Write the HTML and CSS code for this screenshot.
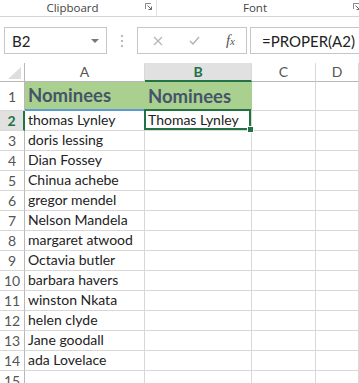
FILE: index.html
```html
<!DOCTYPE html>
<html lang="en">
<head>
    <meta charset="UTF-8">
    <meta name="viewport" content="width=device-width, initial-scale=1.0">
    <title>Nominees - Excel</title>
    <link rel="stylesheet" href="styles.css">
</head>
<body>

<!-- Ribbon group labels -->
<div class="ribbon">
  <div class="group group-clipboard">
    <span class="group-label">Clipboard</span>
    <svg class="launcher" width="7" height="7" viewBox="0 0 7 7"><path d="M0.5 6V0.5H6" fill="none" stroke="#8a8a8a"/><path d="M2.5 2.5L6.5 6.5M3.5 6.5H6.5V3.5" fill="none" stroke="#6a6a6a"/></svg>
  </div>
  <div class="group group-font">
    <span class="group-label">Font</span>
    <svg class="launcher" width="7" height="7" viewBox="0 0 7 7"><path d="M0.5 6V0.5H6" fill="none" stroke="#8a8a8a"/><path d="M2.5 2.5L6.5 6.5M3.5 6.5H6.5V3.5" fill="none" stroke="#6a6a6a"/></svg>
  </div>
</div>

<!-- Formula bar -->
<div class="formula-bar">
  <div class="name-box">
    <span>B2</span>
    <span class="caret"></span>
  </div>
  <div class="grip"><i></i><i></i><i></i></div>
  <div class="fx-buttons">
    <svg width="10" height="10" viewBox="0 0 10 10"><path d="M1 1L9 9M9 1L1 9" stroke="#b5b5b5" stroke-width="1.3"/></svg>
    <svg width="11" height="9" viewBox="0 0 11 9"><path d="M1 5L4 8L10 1" fill="none" stroke="#b5b5b5" stroke-width="1.5"/></svg>
    <span class="fx">f<small>x</small></span>
  </div>
  <div class="formula-input">=PROPER(A2)</div>
</div>

<!-- Worksheet -->
<div class="sheet">
  <div class="hd corner"><span class="corner-tri"></span></div>
  <div class="hd col">A</div>
  <div class="hd col active-col">B</div>
  <div class="hd col">C</div>
  <div class="hd col">D</div>

  <div class="hd row row-1">1</div>
  <div class="cell title title-a">Nominees</div>
  <div class="cell title">Nominees</div>
  <div class="cell"></div>
  <div class="cell"></div>

  <div class="hd row active-row">2</div>
  <div class="cell">thomas Lynley</div>
  <div class="cell selected">Thomas Lynley</div>
  <div class="cell"></div>
  <div class="cell"></div>

  <div class="hd row">3</div><div class="cell">doris lessing</div><div class="cell"></div><div class="cell"></div><div class="cell"></div>
  <div class="hd row">4</div><div class="cell">Dian Fossey</div><div class="cell"></div><div class="cell"></div><div class="cell"></div>
  <div class="hd row">5</div><div class="cell">Chinua achebe</div><div class="cell"></div><div class="cell"></div><div class="cell"></div>
  <div class="hd row">6</div><div class="cell">gregor mendel</div><div class="cell"></div><div class="cell"></div><div class="cell"></div>
  <div class="hd row">7</div><div class="cell">Nelson Mandela</div><div class="cell"></div><div class="cell"></div><div class="cell"></div>
  <div class="hd row">8</div><div class="cell">margaret atwood</div><div class="cell"></div><div class="cell"></div><div class="cell"></div>
  <div class="hd row">9</div><div class="cell">Octavia butler</div><div class="cell"></div><div class="cell"></div><div class="cell"></div>
  <div class="hd row">10</div><div class="cell">barbara havers</div><div class="cell"></div><div class="cell"></div><div class="cell"></div>
  <div class="hd row">11</div><div class="cell">winston Nkata</div><div class="cell"></div><div class="cell"></div><div class="cell"></div>
  <div class="hd row">12</div><div class="cell">helen clyde</div><div class="cell"></div><div class="cell"></div><div class="cell"></div>
  <div class="hd row">13</div><div class="cell">Jane goodall</div><div class="cell"></div><div class="cell"></div><div class="cell"></div>
  <div class="hd row">14</div><div class="cell">ada Lovelace</div><div class="cell"></div><div class="cell"></div><div class="cell"></div>
  <div class="hd row">15</div><div class="cell"></div><div class="cell"></div><div class="cell"></div><div class="cell"></div>
</div>

</body>
</html>
```

FILE: styles.css
```css
body {
  margin: 0;
  width: 359px;
  height: 383px;
  overflow: hidden;
  background: #fff;
  font-family: Lato, "Open Sans", sans-serif;
  color: #222;
}

/* Ribbon */
.ribbon {
  display: flex;
  height: 16px;
  border-bottom: 1px solid #d5d5d5;
}

.group {
  display: flex;
  align-items: center;
  flex: none;
  font-family: "Open Sans", sans-serif;
  font-size: 11.5px;
  color: #444;
}

.group-clipboard {
  width: 156px;
  border-right: 1px solid #e2e2e2;
}

.group-font {
  width: 207px;
}

.group-label {
  flex: 1;
  text-align: center;
  margin-top: -2px;
}

.launcher {
  margin: -3px 4px 0 0;
}

/* Formula bar */
.formula-bar {
  display: flex;
  align-items: center;
  height: 27px;
  margin-top: 10px;
  padding-left: 4px;
}

.name-box,
.fx-buttons,
.formula-input {
  box-sizing: border-box;
  height: 27px;
  border: 1px solid #c6c6c6;
  display: flex;
  align-items: center;
}

.name-box {
  width: 103px;
  padding: 0 7px 0 7px;
  justify-content: space-between;
  font-size: 15px;
  color: #222;
}

.caret {
  width: 0;
  height: 0;
  border-left: 4px solid transparent;
  border-right: 4px solid transparent;
  border-top: 4px solid #777;
}

.grip {
  display: flex;
  flex-direction: column;
  gap: 3px;
  width: 30px;
  align-items: center;
}

.grip i {
  width: 2px;
  height: 2px;
  background: #b8b8b8;
}

.fx-buttons {
  width: 110px;
  padding: 0 11px 0 15px;
  justify-content: space-between;
}

.fx {
  font-family: "Liberation Serif", serif;
  font-style: italic;
  font-size: 15px;
  color: #555;
}

.fx small {
  font-size: 11px;
}

.formula-input {
  flex: 1;
  margin-left: 3px;
  margin-right: -4px;
  padding-left: 11px;
  font-size: 15px;
  color: #222;
}

/* Worksheet */
.sheet {
  display: grid;
  grid-template-columns: 25px 120px 107px 64px 1fr;
  grid-template-rows: 19px 29px repeat(14, 20px);
  margin-top: 9px;
}

.sheet > div {
  box-sizing: border-box;
  border-right: 1px solid #d8d8d8;
  border-bottom: 1px solid #d8d8d8;
  display: flex;
  align-items: flex-end;
  white-space: nowrap;
  overflow: visible;
}

.hd {
  font-size: 14px;
  color: #555;
  justify-content: center;
  padding-bottom: 1px;
}

.hd.col {
  border-bottom-color: #b8b8b8;
  align-items: center;
}

.hd.row {
  border-right-color: #b8b8b8;
}

.corner {
  border-bottom-color: #b8b8b8 !important;
  border-right-color: #b8b8b8 !important;
  justify-content: flex-end !important;
  padding: 0 3px 2px 0;
}

.corner-tri {
  width: 13px;
  height: 12px;
  background: #dedede;
  clip-path: polygon(100% 0, 100% 100%, 0 100%);
}

.active-col {
  background: #e1e1e1;
  color: #217346 !important;
  font-weight: bold;
  border-bottom: 2px solid #217346 !important;
}

.active-row {
  background: #e1e1e1;
  color: #217346 !important;
  font-weight: bold;
  border-right: 2px solid #217346 !important;
}

.row-1 {
  padding-bottom: 5px !important;
}

.cell {
  font-size: 14px;
  padding: 0 0 2px 3px;
}

.title {
  background: #a9d08e;
  border-right-color: #a9d08e !important;
  font-size: 18.5px;
  font-weight: bold;
  color: #44546a;
  padding-bottom: 3px;
}

.title-a {
  border-bottom: 2px solid #5b9bd5 !important;
}

.selected {
  position: relative;
}

.selected::before {
  content: "";
  position: absolute;
  top: -2px;
  left: -1px;
  right: 0;
  bottom: 0;
  border: 2px solid #217346;
}

.selected::after {
  content: "";
  position: absolute;
  right: -3px;
  bottom: -3px;
  width: 5px;
  height: 5px;
  background: #217346;
  border: 1px solid #fff;
}
```
